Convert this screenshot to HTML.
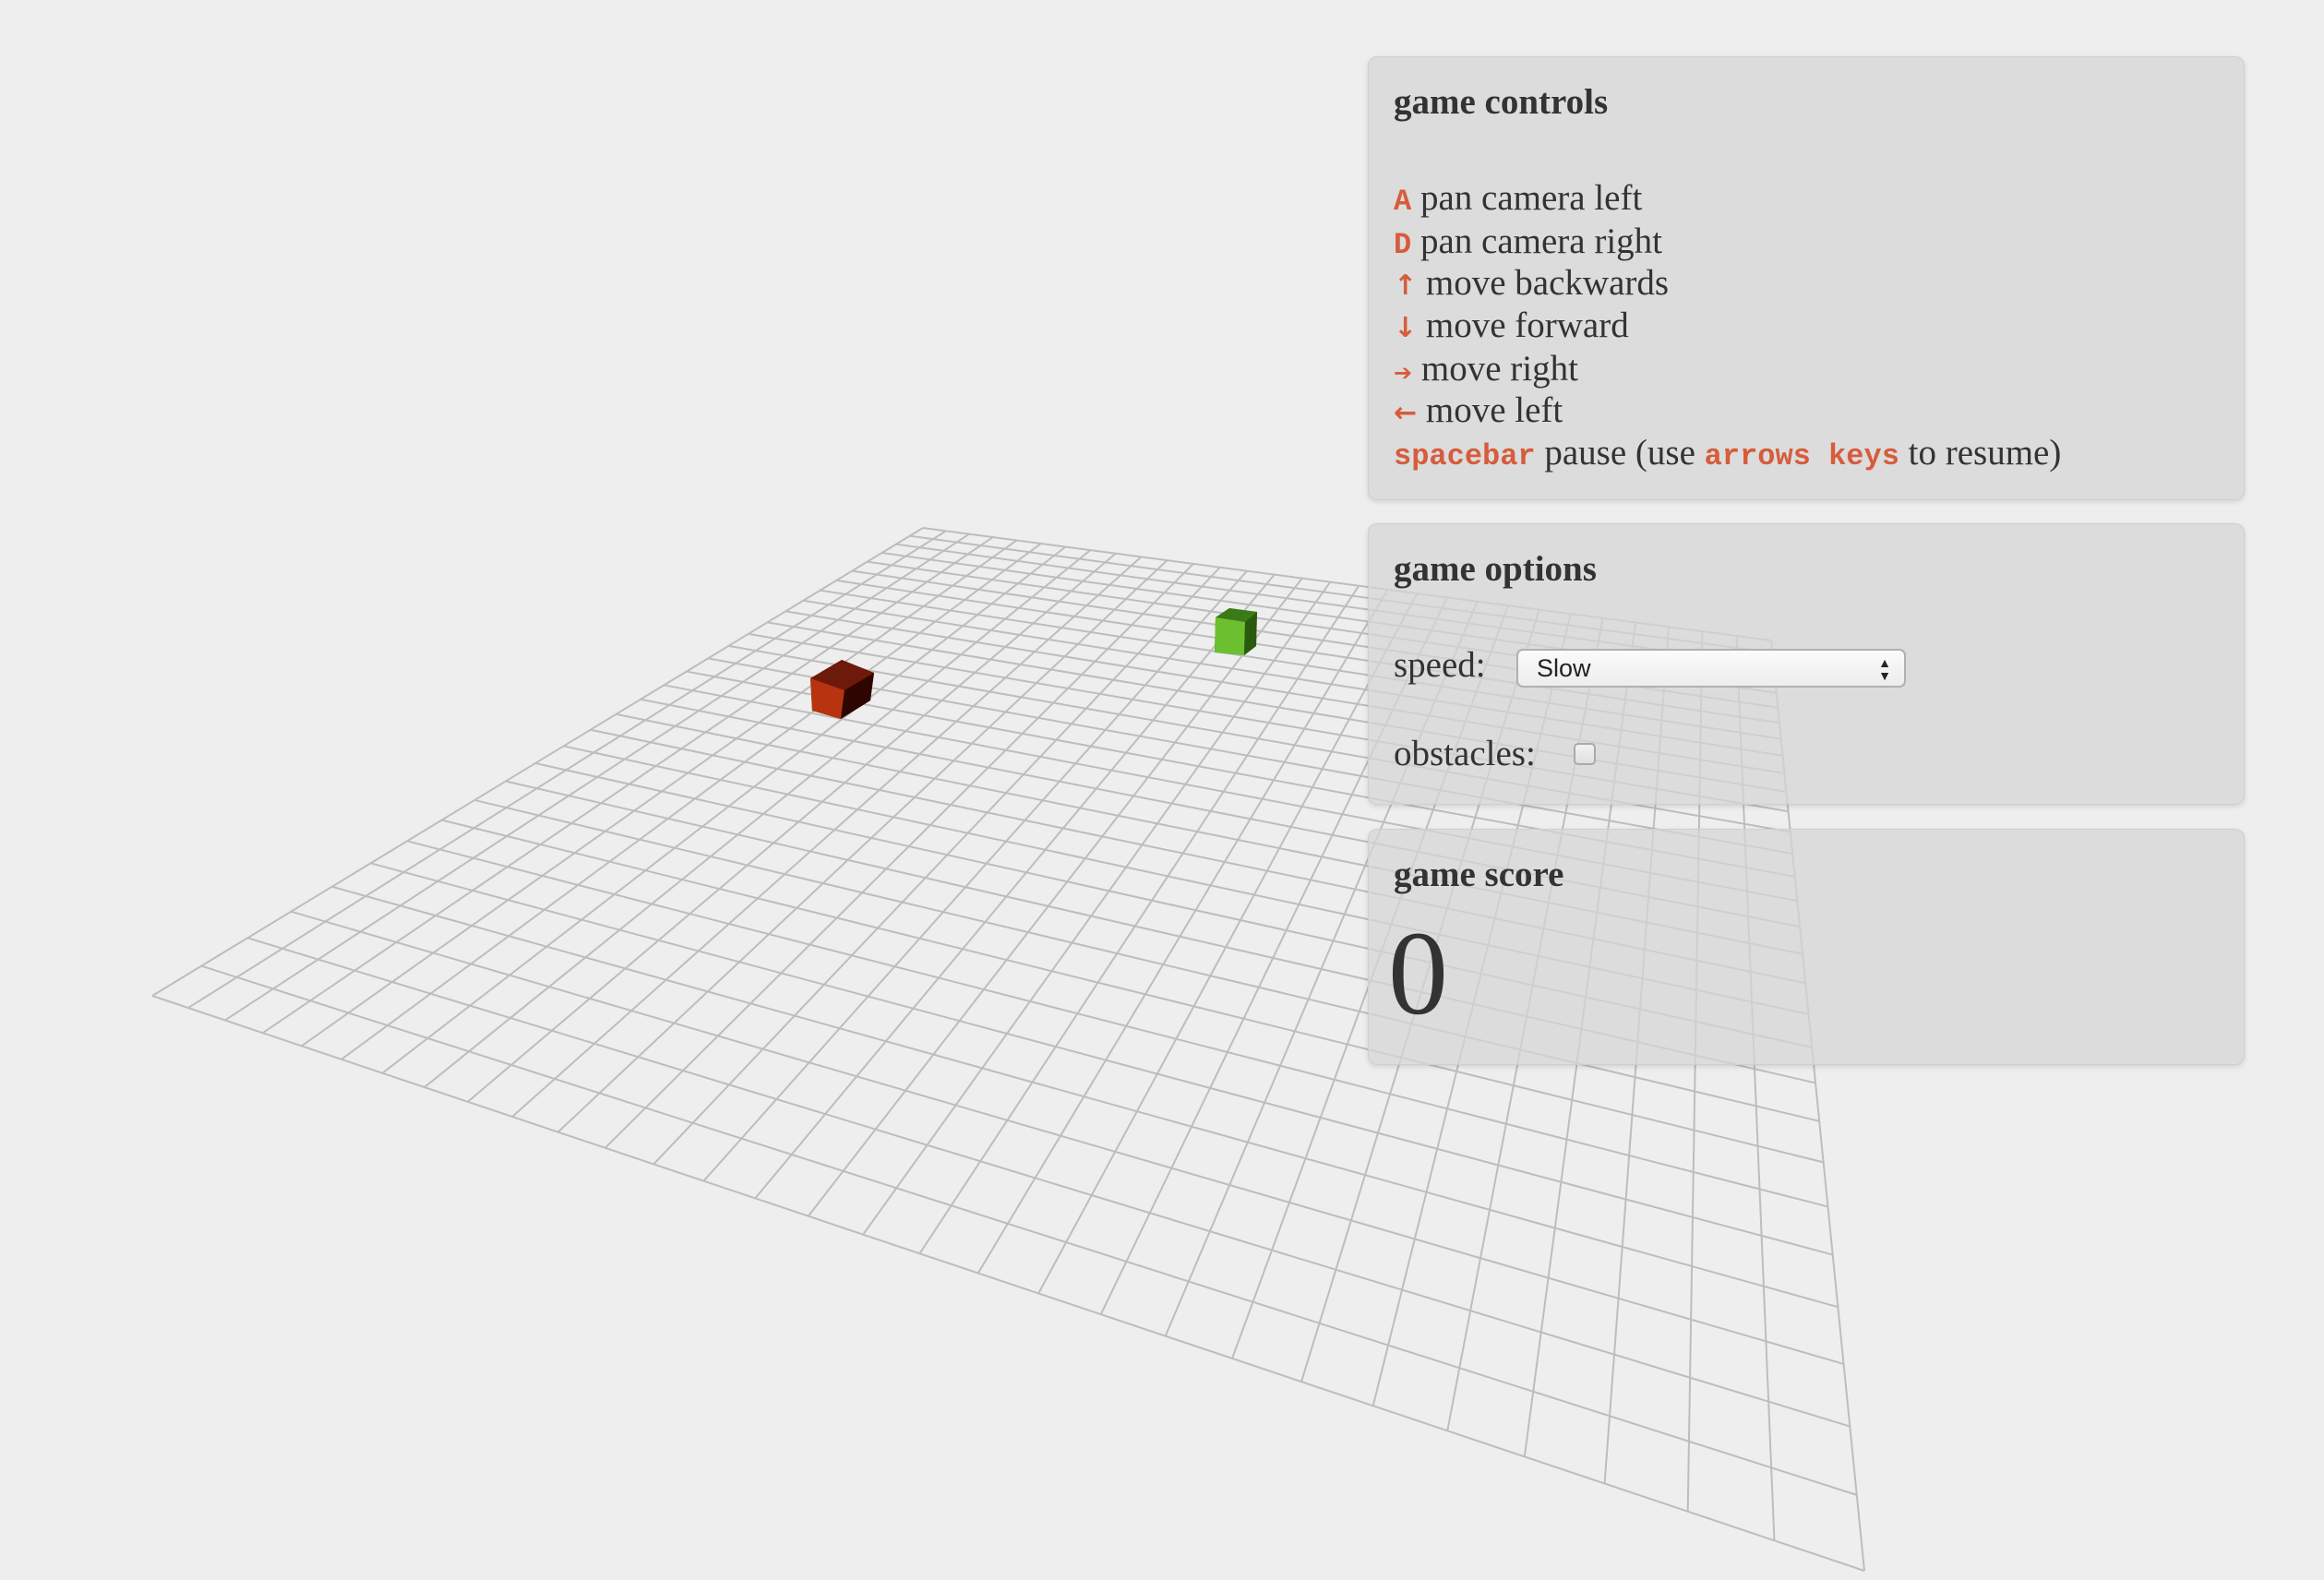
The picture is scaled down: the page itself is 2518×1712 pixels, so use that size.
<!DOCTYPE html>
<html><head><meta charset="utf-8"><style>
html,body{margin:0;padding:0;width:2518px;height:1712px;background:#eeeeee;overflow:hidden;font-family:"Liberation Serif",serif;color:#333}
#g{position:absolute;left:0;top:0}
.p{position:absolute;left:1482px;width:948px;background:rgba(214,214,214,0.72);border:1px solid #cfcfcf;border-radius:10px;box-shadow:0 2px 6px rgba(0,0,0,0.12)}
.t{position:absolute;left:1510px;font-size:39px;line-height:46px;white-space:nowrap}
.h{font-weight:bold}
code{font-family:"Liberation Mono",monospace;color:#d65c3c;font-size:32px;font-weight:bold}
code.a{font-family:"DejaVu Sans",sans-serif;font-size:30px}
.sel{position:absolute;left:1643px;top:703px;width:422px;height:42px;border:2px solid #b0b0b0;border-radius:7px;background:linear-gradient(#fbfbfb,#ededed);box-sizing:border-box;font-family:"Liberation Sans",sans-serif;font-size:27px;line-height:38px;padding-left:20px;color:#222}
.cb{position:absolute;left:1705px;top:805px;width:24px;height:24px;border:2px solid #aaa;border-radius:5px;box-sizing:border-box;background:linear-gradient(#f2f2f2,#e0e0e0)}
</style></head><body>
<svg id="g" width="2518" height="1712" xmlns="http://www.w3.org/2000/svg">
<g id="lines" stroke="#bdbdbd" stroke-width="2" fill="none"></g>
<polygon points="878,735 912,715 947,729 943,759 911,779 880,770" fill="#5c1508"/>
<polygon points="878,735 912,715 947,729 915,748" fill="#6e1a0a"/>
<polygon points="878,735 915,748 911,779 880,770" fill="#b83310"/>
<polygon points="915,748 947,729 943,759 911,779" fill="#2e0500"/>
<polygon points="1317,669 1332,659 1362,663 1361,700 1348,710 1316,707" fill="#3f7a14"/>
<polygon points="1317,669 1332,659 1362,663 1349,674" fill="#3b7a18"/>
<polygon points="1317,669 1349,674 1348,710 1316,707" fill="#6cc030"/>
<polygon points="1349,674 1362,663 1361,700 1348,710" fill="#2a5a0c"/>
</svg>
<script>
(function(){
var P=[[1000,572],[1919,694],[2020,1702],[165,1079]];
var x0=P[0][0],y0=P[0][1],x1=P[1][0],y1=P[1][1],x2=P[2][0],y2=P[2][1],x3=P[3][0],y3=P[3][1];
var dx1=x1-x2,dx2=x3-x2,dy1=y1-y2,dy2=y3-y2,sx=x0-x1+x2-x3,sy=y0-y1+y2-y3;
var den=dx1*dy2-dx2*dy1;
var g=(sx*dy2-dx2*sy)/den,h=(dx1*sy-sx*dy1)/den;
var a=x1-x0+g*x1,b=x3-x0+h*x3,c=x0,d=y1-y0+g*y1,e=y3-y0+h*y3,f=y0;
function m(u,v){var w=g*u+h*v+1;return [(a*u+b*v+c)/w,(d*u+e*v+f)/w];}
var N=30,s='',G=document.getElementById('lines');
for(var i=0;i<=N;i++){var t=i/N,p=m(t,0),q=m(t,1),r=m(0,t),k=m(1,t);
s+='<line x1="'+p[0]+'" y1="'+p[1]+'" x2="'+q[0]+'" y2="'+q[1]+'"/>';
s+='<line x1="'+r[0]+'" y1="'+r[1]+'" x2="'+k[0]+'" y2="'+k[1]+'"/>';}
G.innerHTML=s;
})();
</script>
<div class="p" style="top:61px;height:479px"></div>
<div class="p" style="top:567px;height:303px"></div>
<div class="p" style="top:898px;height:254px"></div>

<div class="t h" style="top:88px">game controls</div>
<div class="t" style="top:192px"><code>A</code> pan camera left</div>
<div class="t" style="top:239px"><code>D</code> pan camera right</div>
<div class="t" style="top:284px"><code class="a">↑</code> move backwards</div>
<div class="t" style="top:330px"><code class="a">↓</code> move forward</div>
<div class="t" style="top:377px"><code class="a" style="font-size:24px">➔</code> move right</div>
<div class="t" style="top:422px"><code class="a">←</code> move left</div>
<div class="t" style="top:468px"><code>spacebar</code> pause (use <code>arrows keys</code> to resume)</div>

<div class="t h" style="top:594px">game options</div>
<div class="t" style="top:698px">speed:</div>
<div class="sel">Slow<span style="position:absolute;right:14px;top:0;font-size:14px;line-height:14px;padding-top:6px">▲<br>▼</span></div>
<div class="t" style="top:794px">obstacles:</div>
<div class="cb"></div>

<div class="t h" style="top:925px">game score</div>
<div class="t" style="top:990px;left:1504px;font-size:130px;line-height:130px">0</div>
</body></html>
